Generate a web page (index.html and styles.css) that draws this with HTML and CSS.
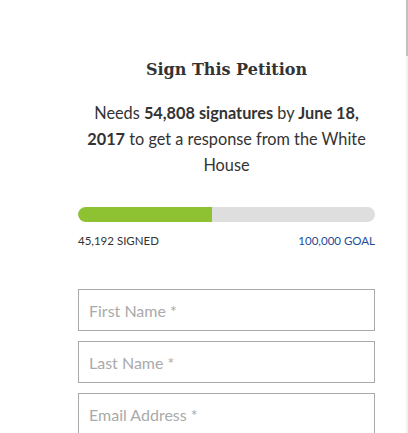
FILE: index.html
```html
<!DOCTYPE html>
<html>
<head>
<meta charset="utf-8">
<link rel="stylesheet" href="styles.css">
</head>
<body>
<div class="page">
  <div class="petition">
    <h2 class="title">Sign This Petition</h2>
    <p class="needs">Needs <b>54,808 signatures</b> by <b>June 18, 2017</b> to get a response from the White House</p>
    <div class="progress"><div class="fill" style="width:45.192%"></div></div>
    <div class="counts"><span class="signed">45,192 SIGNED</span><span class="goal">100,000 GOAL</span></div>
    <form class="form">
      <input class="field" type="text" placeholder="First Name *">
      <input class="field" type="text" placeholder="Last Name *">
      <input class="field" type="text" placeholder="Email Address *">
    </form>
  </div>
  <div class="scrollbar"><div class="thumb"></div></div>
</div>
</body>
</html>
```
FILE: styles.css
```css
html, body {
  margin: 0;
  padding: 0;
  background: #fff;
  overflow: hidden;
}
.page {
  display: flex;
  height: 433px;
  width: 408px;
}
.petition {
  flex: 1;
  padding: 57px 31px 0 78px;
  font-family: Lato, "Liberation Sans", sans-serif;
  color: #333;
}
.title {
  margin: 0;
  text-align: center;
  font-family: "DejaVu Serif", serif;
  font-size: 16px;
  font-weight: bold;
  line-height: 26px;
  color: #333;
}
.needs {
  margin: 17px 0 0;
  text-align: center;
  font-size: 16.3px;
  line-height: 26px;
}
.needs b { font-weight: bold; }
.progress {
  margin-top: 29px;
  height: 15px;
  border-radius: 8px;
  background: #dedede;
  overflow: hidden;
}
.fill {
  height: 100%;
  background: #8fc232;
  border-radius: 8px 0 0 8px;
}
.counts {
  display: flex;
  justify-content: space-between;
  margin-top: 11px;
  font-size: 11.5px;
  line-height: 16px;
}
.goal { color: #1d4c9a; }
.form {
  display: flex;
  flex-direction: column;
  gap: 10px;
  margin-top: 40px;
}
.field {
  box-sizing: border-box;
  height: 42px;
  width: 100%;
  margin: 0;
  border: 1px solid #aaa;
  padding: 0 10px;
  font-family: Lato, "Liberation Sans", sans-serif;
  font-size: 16px;
  color: #333;
  outline: none;
}
.field::placeholder { color: #aaa; }
.scrollbar {
  width: 2px;
  background: #f1f1f1;
}
.thumb {
  height: 56px;
  background: #c1c1c1;
}
```
